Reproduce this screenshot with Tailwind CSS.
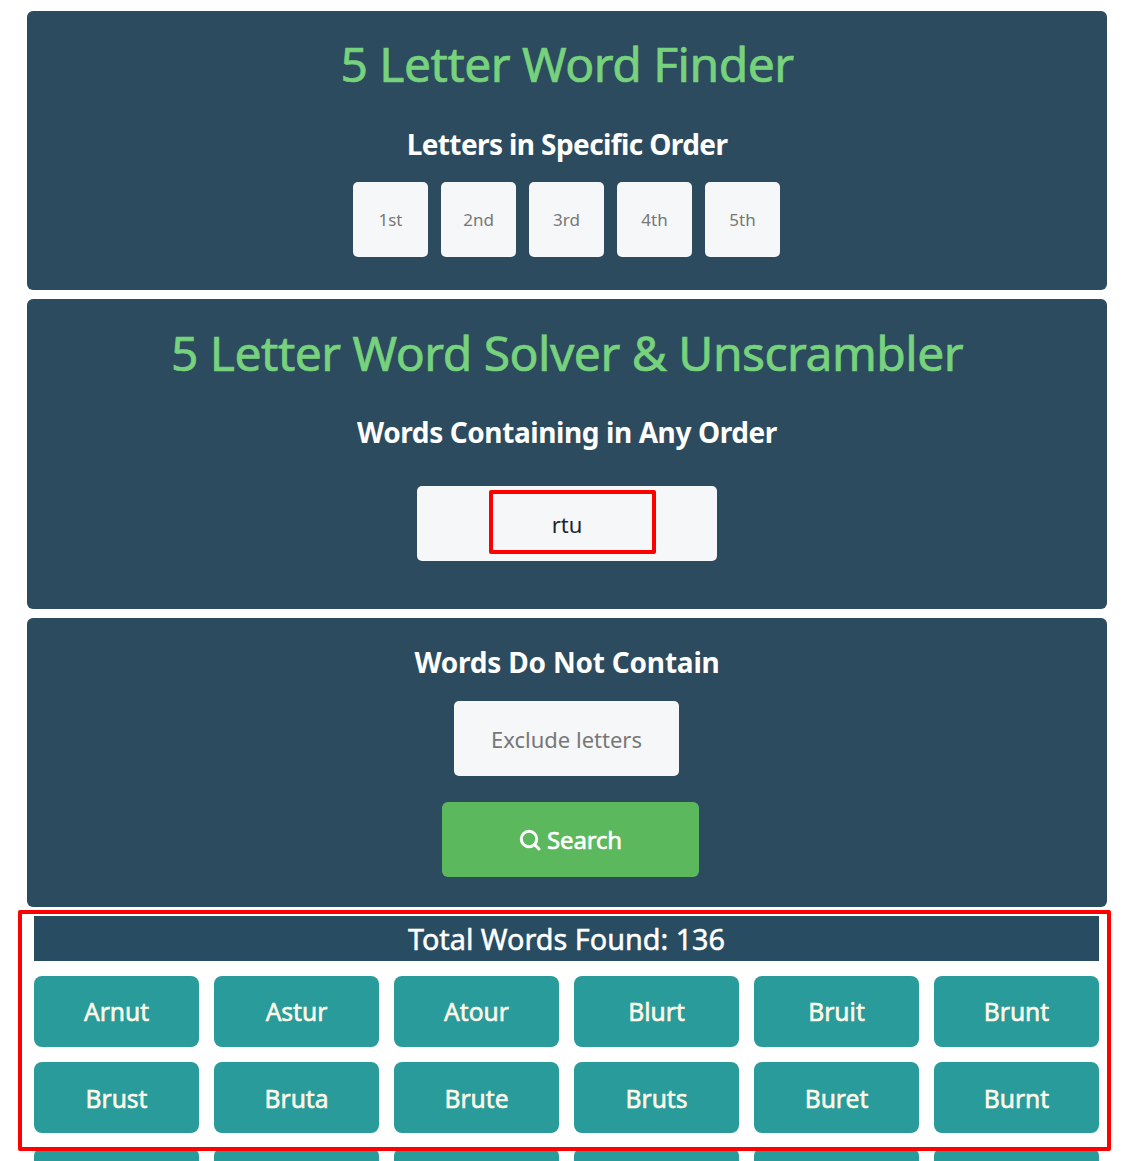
<!DOCTYPE html>
<html lang="en">
  <head>
    <meta charset="UTF-8" />
    <title>5 Letter Word Finder</title>
    <script src="https://cdn.jsdelivr.net/npm/@tailwindcss/browser@4"></script>
  </head>
  <body class="bg-white font-['Noto_Sans',sans-serif] h-[1161px] overflow-hidden relative">
    <div class="pl-[27px] pt-[11px] flex flex-col items-start">
      <!-- specific order -->
      <section class="w-[1080px] h-[279px] bg-[#2d4b5e] rounded-[6px] flex flex-col items-center">
        <h1 class="mt-[22px] h-[62px] leading-[62px] text-[48px] text-[#77d27d] tracking-[-0.5px] [-webkit-text-stroke:0.7px]">5 Letter Word Finder</h1>
        <h2 class="mt-[31px] h-[36px] leading-[36px] text-[28px] font-bold text-white tracking-[-0.6px]">Letters in Specific Order</h2>
        <div class="mt-[20px] mr-[1px] flex gap-[13px]">
          <input class="w-[75px] h-[75px] rounded-[5px] bg-[#f6f7f9] text-center text-[17px] placeholder:text-[#777]" placeholder="1st" />
          <input class="w-[75px] h-[75px] rounded-[5px] bg-[#f6f7f9] text-center text-[17px] placeholder:text-[#777]" placeholder="2nd" />
          <input class="w-[75px] h-[75px] rounded-[5px] bg-[#f6f7f9] text-center text-[17px] placeholder:text-[#777]" placeholder="3rd" />
          <input class="w-[75px] h-[75px] rounded-[5px] bg-[#f6f7f9] text-center text-[17px] placeholder:text-[#777]" placeholder="4th" />
          <input class="w-[75px] h-[75px] rounded-[5px] bg-[#f6f7f9] text-center text-[17px] placeholder:text-[#777]" placeholder="5th" />
        </div>
      </section>

      <!-- any order -->
      <section class="mt-[9px] w-[1080px] h-[310px] bg-[#2d4b5e] rounded-[6px] flex flex-col items-center">
        <h1 class="mt-[23px] h-[62px] leading-[62px] text-[48px] text-[#77d27d] tracking-[-0.5px] [-webkit-text-stroke:0.7px]">5 Letter Word Solver &amp; Unscrambler</h1>
        <h2 class="mt-[30px] h-[36px] leading-[36px] text-[28px] font-bold text-white tracking-[-0.4px]">Words Containing in Any Order</h2>
        <input class="mt-[36px] w-[300px] h-[75px] rounded-[5px] bg-[#f6f7f9] text-center text-[22px] text-[#212529]" value="rtu" />
      </section>

      <!-- exclude -->
      <section class="mt-[9px] w-[1080px] h-[289px] bg-[#2d4b5e] rounded-[6px] flex flex-col items-center">
        <h2 class="mt-[26px] h-[36px] leading-[36px] text-[28px] font-bold text-white tracking-[-0.2px]">Words Do Not Contain</h2>
        <input class="mt-[21px] mr-[1px] w-[225px] h-[75px] rounded-[5px] bg-[#f6f7f9] text-center text-[22px] placeholder:text-[#777]" placeholder="Exclude letters" />
        <button class="mt-[26px] ml-[7px] w-[257px] h-[75px] rounded-[6px] bg-[#5cb85c] text-white text-[24px] tracking-[-0.2px] [-webkit-text-stroke:0.6px] flex items-center justify-center gap-[6px]">
          <svg class="w-[22px] h-[22px]" viewBox="0 0 22 22" fill="none" stroke="currentColor" stroke-width="3">
            <circle cx="10" cy="10" r="7.7" />
            <path d="M15.5 15.5 20 20" stroke-linecap="round" />
          </svg>
          Search
        </button>
      </section>

      <!-- results -->
      <div class="mt-[9px] ml-[7px] w-[1065px]">
        <div class="h-[45px] leading-[45px] bg-[#284c62] text-white text-[28.8px] [-webkit-text-stroke:0.5px] text-center">Total Words Found: 136</div>
        <div class="mt-[15px] grid grid-cols-6 gap-[15px] auto-rows-[71px] text-[#fdf8e8] text-[24.6px] [-webkit-text-stroke:0.6px]">
          <div class="bg-[#289b9a] rounded-[8px] flex items-center justify-center pt-[2px]">Arnut</div>
          <div class="bg-[#289b9a] rounded-[8px] flex items-center justify-center pt-[2px]">Astur</div>
          <div class="bg-[#289b9a] rounded-[8px] flex items-center justify-center pt-[2px]">Atour</div>
          <div class="bg-[#289b9a] rounded-[8px] flex items-center justify-center pt-[2px]">Blurt</div>
          <div class="bg-[#289b9a] rounded-[8px] flex items-center justify-center pt-[2px]">Bruit</div>
          <div class="bg-[#289b9a] rounded-[8px] flex items-center justify-center pt-[2px]">Brunt</div>
          <div class="bg-[#289b9a] rounded-[8px] flex items-center justify-center pt-[4px]">Brust</div>
          <div class="bg-[#289b9a] rounded-[8px] flex items-center justify-center pt-[4px]">Bruta</div>
          <div class="bg-[#289b9a] rounded-[8px] flex items-center justify-center pt-[4px]">Brute</div>
          <div class="bg-[#289b9a] rounded-[8px] flex items-center justify-center pt-[4px]">Bruts</div>
          <div class="bg-[#289b9a] rounded-[8px] flex items-center justify-center pt-[4px]">Buret</div>
          <div class="bg-[#289b9a] rounded-[8px] flex items-center justify-center pt-[4px]">Burnt</div>
          <div class="bg-[#289b9a] rounded-[8px]"></div>
          <div class="bg-[#289b9a] rounded-[8px]"></div>
          <div class="bg-[#289b9a] rounded-[8px]"></div>
          <div class="bg-[#289b9a] rounded-[8px]"></div>
          <div class="bg-[#289b9a] rounded-[8px]"></div>
          <div class="bg-[#289b9a] rounded-[8px]"></div>
        </div>
      </div>
    </div>

    <!-- red annotation boxes -->
    <div class="absolute left-[489px] top-[490px] w-[167px] h-[64px] border-[4px] border-[#f00] rounded-[2px]"></div>
    <div class="absolute left-[18px] top-[910px] w-[1093px] h-[241px] border-[4px] border-[#f00] rounded-[2px]"></div>
  </body>
</html>
